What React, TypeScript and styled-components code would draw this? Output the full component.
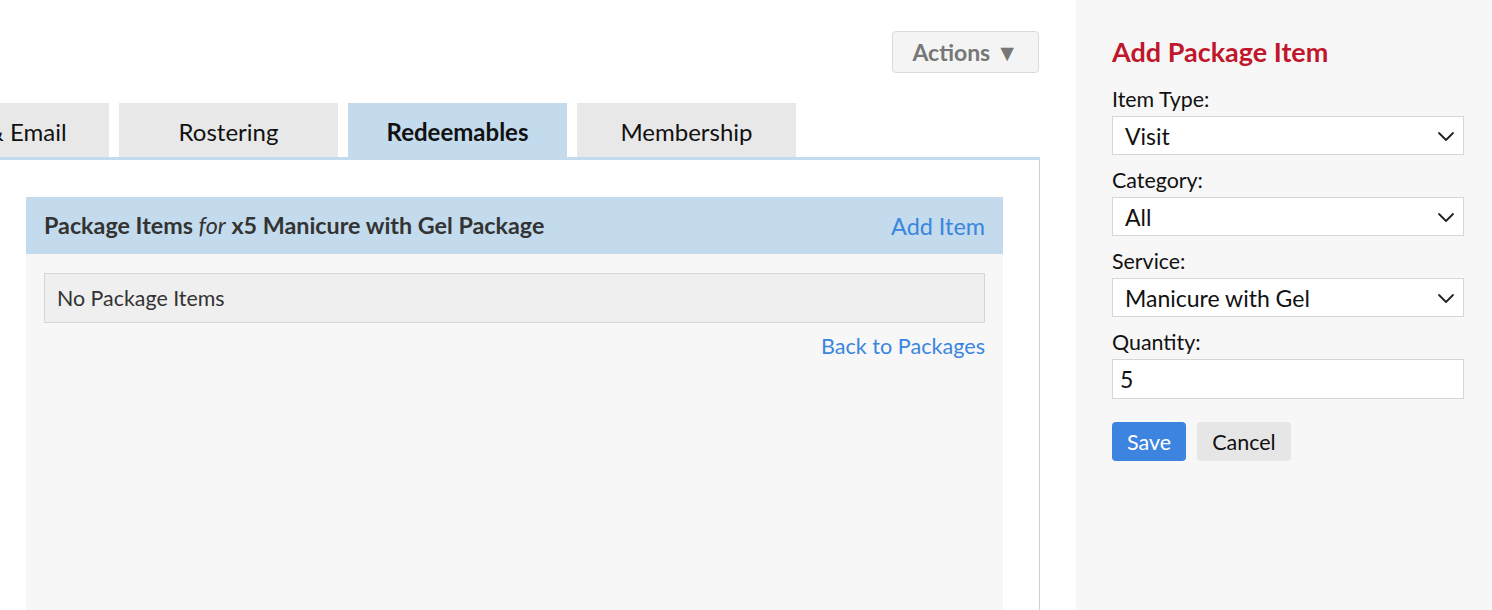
import { FC } from "react";
import styled, { createGlobalStyle } from "styled-components";

const colors = {
  white: "#ffffff",
  panel: "#f7f7f7",
  tab: "#e8e8e8",
  activeTab: "#c3dbec",
  text: "#333333",
  label: "#111111",
  link: "#3a86df",
  red: "#c1172c",
  border: "#d6d6d6",
};

const GlobalStyle = createGlobalStyle`
  html, body {
    margin: 0;
    padding: 0;
    background: ${colors.white};
    font-family: Lato, "Open Sans", "Liberation Sans", sans-serif;
  }
`;

const Page = styled.div`
  display: flex;
  height: 610px;
  overflow: hidden;
`;

const Main = styled.main`
  width: 1076px;
  flex-shrink: 0;
  padding-top: 31px;
  box-sizing: border-box;
`;

const MainInner = styled.div`
  width: 1040px;
  display: flex;
  flex-direction: column;
  height: 100%;
`;

const Toolbar = styled.div`
  display: flex;
  justify-content: flex-end;
  padding-right: 1px;
`;

const ActionsButton = styled.button`
  height: 42px;
  width: 147px;
  border: 1px solid #dadada;
  border-radius: 4px;
  background: #f4f4f4;
  color: #777;
  font-family: inherit;
  font-weight: 700;
  font-size: 23px;
  cursor: pointer;
`;

const Tabs = styled.ul`
  display: flex;
  gap: 10px;
  margin: 30px 0 0 -110px;
  padding: 0;
  list-style: none;
  border-bottom: 3px solid ${colors.activeTab};
`;

const Tab = styled.li<{ $active?: boolean }>`
  width: 219px;
  height: 54px;
  box-sizing: border-box;
  padding-top: 3px;
  display: flex;
  align-items: center;
  justify-content: center;
  background: ${(p) => (p.$active ? colors.activeTab : colors.tab)};
  color: #111;
  font-size: 24px;
  line-height: 28px;
  font-weight: ${(p) => (p.$active ? 700 : 400)};
`;

const Content = styled.section`
  flex: 1;
  border-right: 1px solid #cfcfcf;
  padding: 37px 36px 0 26px;
  display: flex;
`;

const Panel = styled.div`
  flex: 1;
  background: ${colors.panel};
  display: flex;
  flex-direction: column;
`;

const PanelHeader = styled.div`
  height: 57px;
  background: ${colors.activeTab};
  display: flex;
  align-items: center;
  justify-content: space-between;
  padding: 0 18px;
`;

const PanelTitle = styled.h2`
  margin: 0 0 2px;
  font-size: 23.3px;
  line-height: 28px;
  font-weight: 700;
  color: ${colors.text};

  em {
    font-weight: 400;
  }
`;

const Link = styled.a<{ $size?: number }>`
  color: ${colors.link};
  font-size: ${(p) => p.$size ?? 23.4}px;
  line-height: 28px;
  text-decoration: none;
`;

const PanelBody = styled.div`
  padding: 19px 18px 0;
  display: flex;
  flex-direction: column;
  align-items: flex-end;
`;

const EmptyBox = styled.div`
  align-self: stretch;
  height: 50px;
  box-sizing: border-box;
  border: 1px solid ${colors.border};
  background: #efefef;
  display: flex;
  align-items: center;
  padding: 0 12px;
  font-size: 21.4px;
  color: ${colors.text};
`;

const BackLink = styled(Link)`
  margin-top: 9px;
`;

const Sidebar = styled.aside`
  flex: 1;
  background: ${colors.panel};
  padding: 36px 28px 0 36px;
`;

const SidebarTitle = styled.h3`
  margin: 0 0 18px;
  color: ${colors.red};
  font-size: 27px;
  font-weight: 700;
  line-height: 32px;
`;

const Field = styled.div`
  display: flex;
  flex-direction: column;
  margin-bottom: 12px;
`;

const Label = styled.label`
  font-size: 21.4px;
  line-height: 26px;
  color: ${colors.label};
  margin-bottom: 4px;
`;

const SelectBox = styled.div`
  height: 39px;
  box-sizing: border-box;
  background: ${colors.white};
  border: 1px solid ${colors.border};
  display: flex;
  align-items: center;
  justify-content: space-between;
  padding: 0 8px 0 12px;
  font-size: 23px;
  color: #111;
`;

const Input = styled.input`
  height: 40px;
  box-sizing: border-box;
  background: ${colors.white};
  border: 1px solid ${colors.border};
  padding: 0 12px 0 7px;
  font-family: inherit;
  font-size: 23px;
  color: #111;
  outline: none;
`;

const Buttons = styled.div`
  display: flex;
  gap: 11px;
  margin-top: 23px;
`;

const Button = styled.button<{ $primary?: boolean }>`
  height: 39px;
  padding: 0 15px;
  border: none;
  border-radius: 4px;
  font-family: inherit;
  font-size: 21.5px;
  background: ${(p) => (p.$primary ? "#3c84e0" : "#e6e6e6")};
  color: ${(p) => (p.$primary ? colors.white : "#111")};
  cursor: pointer;
`;

const Chevron: FC = () => (
  <svg width="18" height="18" viewBox="0 0 18 18" fill="none">
    <path d="M2 6l7 7 7-7" stroke="#222" strokeWidth="1.8" strokeLinecap="round" strokeLinejoin="round" />
  </svg>
);

const Select: FC<{ value: string }> = ({ value }) => (
  <SelectBox>
    <span>{value}</span>
    <Chevron />
  </SelectBox>
);

const App: FC = () => (
  <>
    <GlobalStyle />
    <Page>
      <Main>
        <MainInner>
          <Toolbar>
            <ActionsButton>Actions ▼</ActionsButton>
          </Toolbar>
          <Tabs>
            <Tab>SMS &amp; Email</Tab>
            <Tab>Rostering</Tab>
            <Tab $active>Redeemables</Tab>
            <Tab>Membership</Tab>
          </Tabs>
          <Content>
            <Panel>
              <PanelHeader>
                <PanelTitle>
                  Package Items <em>for</em> x5 Manicure with Gel Package
                </PanelTitle>
                <Link href="#">Add Item</Link>
              </PanelHeader>
              <PanelBody>
                <EmptyBox>No Package Items</EmptyBox>
                <BackLink href="#" $size={21.6}>
                  Back to Packages
                </BackLink>
              </PanelBody>
            </Panel>
          </Content>
        </MainInner>
      </Main>
      <Sidebar>
        <SidebarTitle>Add Package Item</SidebarTitle>
        <Field>
          <Label>Item Type:</Label>
          <Select value="Visit" />
        </Field>
        <Field>
          <Label>Category:</Label>
          <Select value="All" />
        </Field>
        <Field>
          <Label>Service:</Label>
          <Select value="Manicure with Gel" />
        </Field>
        <Field>
          <Label>Quantity:</Label>
          <Input defaultValue="5" />
        </Field>
        <Buttons>
          <Button $primary>Save</Button>
          <Button>Cancel</Button>
        </Buttons>
      </Sidebar>
    </Page>
  </>
);

export default App;
